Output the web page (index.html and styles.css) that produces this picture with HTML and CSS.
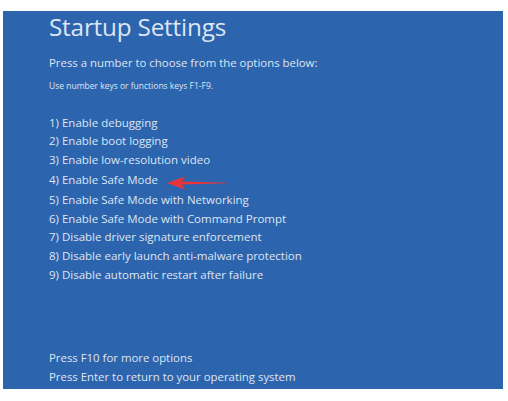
FILE: index.html
```html
<!DOCTYPE html>
<html>
<head>
<meta charset="utf-8">
<link rel="stylesheet" href="styles.css">
</head>
<body>
<div class="screen">
  <h1 class="title">Startup Settings</h1>
  <p class="lead">Press a number to choose from the options below:</p>
  <p class="hint">Use number keys or functions keys F1-F9.</p>
  <ol class="options">
    <li>1) Enable debugging</li>
    <li>2) Enable boot logging</li>
    <li>3) Enable low-resolution video</li>
    <li class="marked">4) Enable Safe Mode
      <svg class="arrow" width="60" height="16" viewBox="0 0 60 16">
        <path d="M0 8 L18 1.5 L15 6.6 L60 7.7 L60 8.3 L15 9.4 L18 14.5 Z" fill="#e8343a"/>
      </svg>
    </li>
    <li>5) Enable Safe Mode with Networking</li>
    <li>6) Enable Safe Mode with Command Prompt</li>
    <li>7) Disable driver signature enforcement</li>
    <li>8) Disable early launch anti-malware protection</li>
    <li>9) Disable automatic restart after failure</li>
  </ol>
  <div class="footer">
    <p>Press F10 for more options</p>
    <p>Press Enter to return to your operating system</p>
  </div>
</div>
</body>
</html>
```

FILE: styles.css
```css
html, body {
  margin: 0;
  padding: 0;
  background: #ffffff;
}
body {
  padding: 11px 5px 12px 3px;
  width: 500px;
}
.screen {
  background: #2d64ae;
  height: 378px;
  display: flex;
  flex-direction: column;
  padding-left: 46px;
  box-sizing: border-box;
  color: #dde6f3;
  font-family: "Open Sans", "Noto Sans", sans-serif;
}
.title {
  margin: 0;
  font-weight: 400;
  font-size: 24.3px;
  line-height: 30px;
  margin-top: 1px;
  letter-spacing: -0.2px;
}
.lead {
  margin: 13px 0 0 0;
  font-size: 11.4px;
  line-height: 16px;
}
.hint {
  margin: 10px 0 0 0;
  font-size: 8.5px;
  line-height: 10px;
}
.options {
  list-style: none;
  margin: 22.5px 0 0 0;
  padding: 0;
  font-size: 11.5px;
  line-height: 18.75px;
}
.options li {
  display: flex;
  align-items: center;
  gap: 9px;
}
.arrow {
  display: block;
  margin-top: 5px;
}
.footer {
  margin-top: auto;
  padding-bottom: 3px;
  font-size: 11.4px;
  line-height: 19px;
}
.footer p {
  margin: 0;
}
```
